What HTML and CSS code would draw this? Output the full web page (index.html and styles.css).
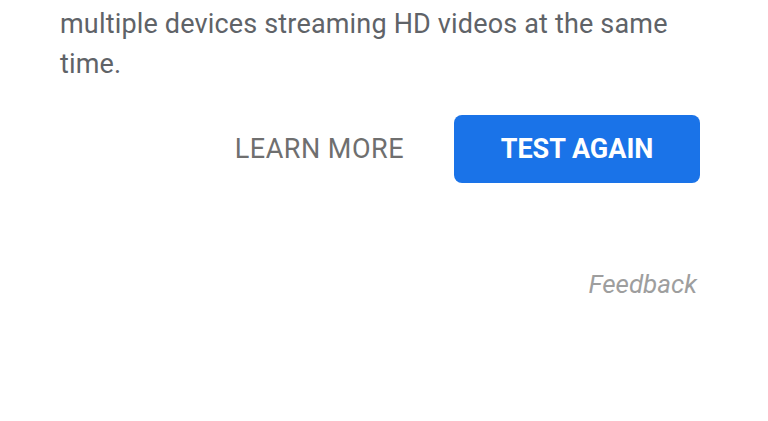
FILE: index.html
```html
<!DOCTYPE html>
<html lang="en">
<head>
    <meta charset="UTF-8">
    <meta name="viewport" content="width=device-width, initial-scale=1.0">
    <title>Speed Test</title>
    <link rel="stylesheet" href="styles.css">
</head>
<body>
    <div class="result-card">
        <p class="result-text">multiple devices streaming HD videos at the same time.</p>
        <div class="actions">
            <a href="#" class="learn-more">LEARN MORE</a>
            <button type="button" class="test-again">TEST AGAIN</button>
        </div>
        <div class="feedback-row">
            <a href="#" class="feedback">Feedback</a>
        </div>
    </div>
</body>
</html>
```

FILE: styles.css
```css
* {
    margin: 0;
    padding: 0;
    box-sizing: border-box;
}

body {
    font-family: Roboto, "Noto Sans", sans-serif;
    background: #fff;
    width: 768px;
    height: 421px;
    overflow: hidden;
}

.result-card {
    padding: 4px 68px 0 60px;
}

.result-text {
    font-size: 27px;
    line-height: 40px;
    letter-spacing: 0.17px;
    color: #5f6368;
}

.actions {
    display: flex;
    justify-content: flex-end;
    align-items: center;
    gap: 50px;
    margin-top: 31px;
}

.learn-more {
    font-size: 27px;
    letter-spacing: 0.5px;
    color: #6f6f6f;
    text-decoration: none;
}

.test-again {
    width: 246px;
    height: 68px;
    font-family: Roboto, sans-serif;
    font-size: 27px;
    font-weight: 700;
    color: #fff;
    background: #1a73e8;
    border: none;
    border-radius: 8px;
    cursor: pointer;
}

.feedback-row {
    display: flex;
    justify-content: flex-end;
    margin-top: 85px;
    padding-right: 3px;
}

.feedback {
    font-size: 26px;
    line-height: 32px;
    font-style: italic;
    color: #9e9e9e;
    text-decoration: none;
}
```
